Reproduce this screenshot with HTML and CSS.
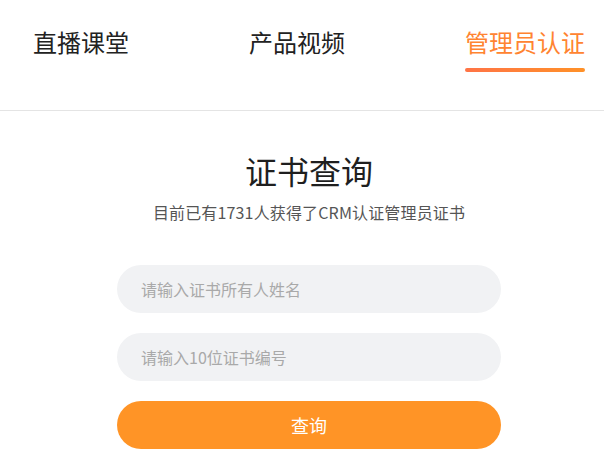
FILE: index.html
```html
<!DOCTYPE html>
<html lang="zh-CN">
<head>
<meta charset="utf-8">
<title>证书查询</title>
<link rel="stylesheet" href="styles.css">
</head>
<body>
<div class="page">
  <header class="tabs">
    <div class="tab">直播课堂</div>
    <div class="tab">产品视频</div>
    <div class="tab active">管理员认证</div>
  </header>
  <main class="query">
    <h1 class="title">证书查询</h1>
    <p class="subtitle">目前已有1731人获得了CRM认证管理员证书</p>
    <form class="form">
      <input class="field" type="text" placeholder="请输入证书所有人姓名">
      <input class="field" type="text" placeholder="请输入10位证书编号">
      <button class="submit" type="button">查询</button>
    </form>
  </main>
</div>
</body>
</html>
```
FILE: styles.css
```css
html, body {
  margin: 0;
  padding: 0;
  overflow: hidden;
  background: #fff;
}
body {
  font-family: "Noto Sans CJK SC", "Noto Sans", sans-serif;
  color: #222;
}
.page {
  width: 618px;
}
.tabs {
  display: flex;
  justify-content: space-between;
  align-items: flex-start;
  padding: 26px 33px 38px;
  border-bottom: 1px solid #e4e4e4;
}
.tab {
  font-size: 24px;
  line-height: 32px;
  color: #222;
  padding-bottom: 14px;
}
.tab.active {
  color: #ff8431;
  position: relative;
}
.tab.active::after {
  content: "";
  position: absolute;
  left: 0;
  right: 0;
  bottom: 0;
  height: 4px;
  border-radius: 2px;
  background: linear-gradient(90deg, #ff7446, #ff9128);
}
.query {
  display: flex;
  flex-direction: column;
  align-items: center;
  padding-top: 39px;
}
.title {
  margin: 0;
  font-size: 32px;
  line-height: 40px;
  font-weight: 400;
  color: #1f1f1f;
}
.subtitle {
  margin: 11px 0 0;
  font-size: 16px;
  line-height: 22px;
  letter-spacing: 0.15px;
  color: #555;
}
.form {
  display: flex;
  flex-direction: column;
  gap: 20px;
  width: 384px;
  margin-top: 42px;
}
.field {
  height: 48px;
  box-sizing: border-box;
  border: none;
  outline: none;
  border-radius: 24px;
  background: #f1f2f4;
  padding: 0 24px;
  font-family: inherit;
  font-size: 16px;
  color: #333;
}
.field::placeholder {
  color: #a9a9a9;
}
.submit {
  height: 48px;
  border: none;
  border-radius: 24px;
  background: #ff9426;
  color: #fff;
  font-family: inherit;
  font-size: 18px;
}
```
